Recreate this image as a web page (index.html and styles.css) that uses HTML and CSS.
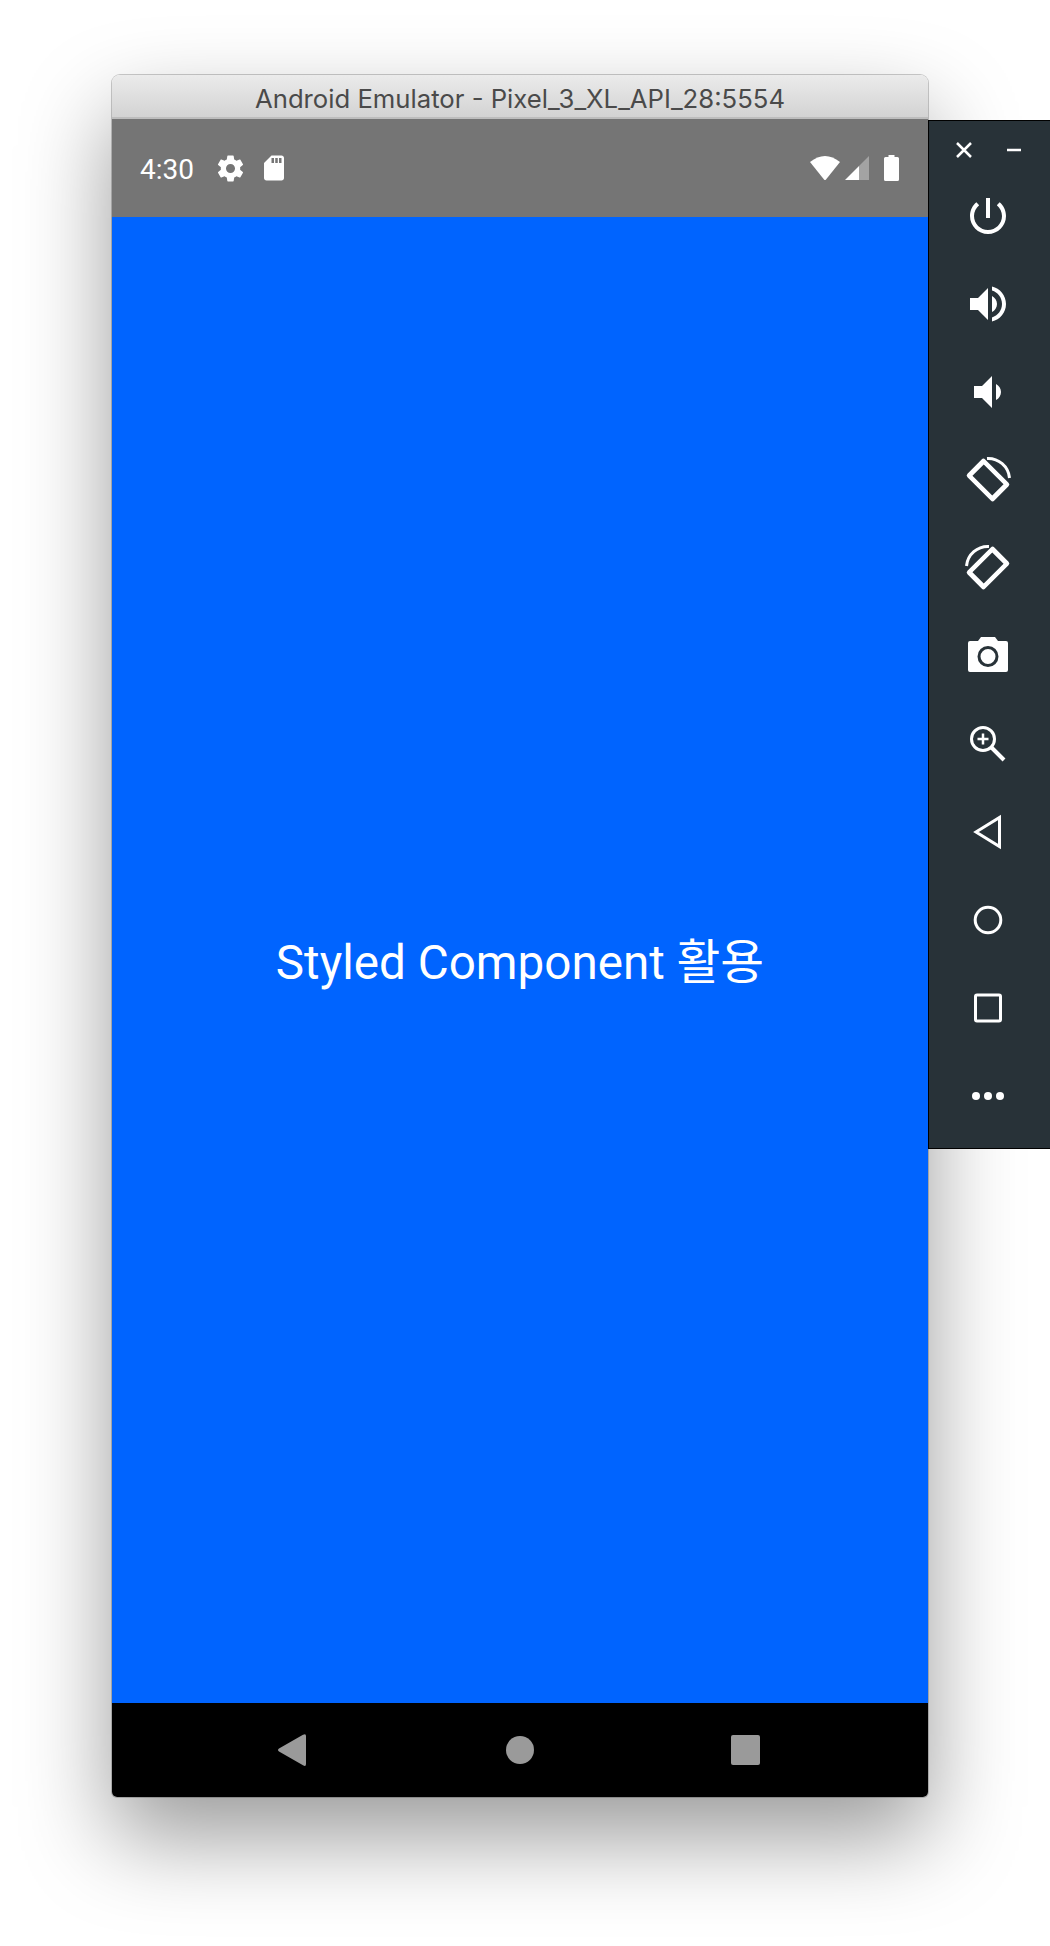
FILE: index.html
```html
<!DOCTYPE html>
<html>

<head>
	<title>Android Emulator - Pixel_3_XL_API_28:5554</title>
	<link rel="stylesheet" href="styles.css">
</head>

<body>
	<div class="stage">
		<div class="window">
			<div class="titlebar">Android Emulator - Pixel_3_XL_API_28:5554</div>
			<div class="statusbar">
				<div class="status-left">
					<span class="time">4:30</span>
					<svg class="status-gear" viewBox="0 0 24 24"><path d="M19.43 12.98c.04-.32.07-.64.07-.98s-.03-.66-.07-.98l2.11-1.65c.19-.15.24-.42.12-.64l-2-3.46c-.12-.22-.39-.3-.61-.22l-2.49 1c-.52-.4-1.08-.73-1.69-.98l-.38-2.65C14.46 2.18 14.25 2 14 2h-4c-.25 0-.46.18-.49.42l-.38 2.65c-.61.25-1.17.59-1.69.98l-2.49-1c-.23-.09-.49 0-.61.22l-2 3.46c-.13.22-.07.49.12.64l2.11 1.65c-.04.32-.07.65-.07.98s.03.66.07.98l-2.11 1.65c-.19.15-.24.42-.12.64l2 3.46c.12.22.39.3.61.22l2.49-1c.52.4 1.08.73 1.69.98l.38 2.65c.03.24.24.42.49.42h4c.25 0 .46-.18.49-.42l.38-2.65c.61-.25 1.17-.59 1.69-.98l2.49 1c.23.09.49 0 .61-.22l2-3.46c.12-.22.07-.49-.12-.64l-2.11-1.65zM12 15.5c-1.93 0-3.5-1.57-3.5-3.5s1.57-3.5 3.5-3.5 3.5 1.57 3.5 3.5-1.57 3.5-3.5 3.5z"/></svg>
					<svg class="status-sd" viewBox="0 0 24 24"><path d="M18 2h-8L4.02 8 4 20c0 1.1.9 2 2 2h12c1.1 0 2-.9 2-2V4c0-1.1-.9-2-2-2zm-6 6h-2V4h2v4zm3 0h-2V4h2v4zm3 0h-2V4h2v4z"/></svg>
				</div>
				<div class="status-right">
					<svg class="status-wifi" viewBox="0 0 30 25"><path d="M0 6Q15 -6 30 6L16 23.5Q15 24.5 14 23.5Z"/></svg>
					<svg class="status-signal" viewBox="0 0 24 24">
						<path d="M14 10L0 24H14Z"/>
						<path class="signal-empty" d="M14 10L24 0V24H14Z"/>
					</svg>
					<svg class="status-battery" viewBox="0 0 15 26"><path d="M4.5 0H10.500V2H13.500Q15 2 15 3.500V24.500Q15 26 13.500 26H1.500Q0 26 0 24.500V3.500Q0 2 1.500 2H4.500Z"/></svg>
				</div>
			</div>
			<div class="app">
				<span class="app-text">Styled Component 활용</span>
			</div>
			<div class="navbar">
				<svg class="nav-back" viewBox="0 0 28 32"><path d="M1 14.500L25 .8Q28 -1 28 2V30Q28 33 25 31.200L1 17.500Q-1 16 1 14.500Z"/></svg>
				<span class="nav-home"></span>
				<span class="nav-recent"></span>
			</div>
		</div>

		<div class="toolbar">
			<div class="toolbar-top">
				<svg class="tool-small" viewBox="0 0 16 16"><path d="M1 1L15 15M15 1L1 15"/></svg>
				<svg class="tool-small" viewBox="0 0 16 16"><path d="M1 8H15"/></svg>
			</div>
			<div class="tool">
				<svg viewBox="0 0 24 24"><path d="M13 3h-2v10h2V3zm4.830 2.170l-1.420 1.420C17.990 7.860 19 9.810 19 12c0 3.870-3.130 7-7 7s-7-3.130-7-7c0-2.190 1.010-4.140 2.580-5.420L6.170 5.170C4.230 6.820 3 9.260 3 12c0 4.970 4.030 9 9 9s9-4.030 9-9c0-2.740-1.230-5.180-3.170-6.830z"/></svg>
			</div>
			<div class="tool">
				<svg viewBox="0 0 24 24"><path d="M3 9v6h4l5 5V4L7 9H3zm13.500 3c0-1.770-1.020-3.290-2.500-4.030v8.050c1.480-.73 2.500-2.250 2.500-4.020zM14 3.230v2.060c2.890.86 5 3.540 5 6.710s-2.110 5.850-5 6.710v2.060c4.010-.91 7-4.490 7-8.770s-2.990-7.860-7-8.770z"/></svg>
			</div>
			<div class="tool">
				<svg viewBox="0 0 24 24"><path d="M18.500 12c0-1.770-1.020-3.290-2.500-4.030v8.050c1.480-.73 2.500-2.250 2.500-4.020zM5 9v6h4l5 5V4L9 9H5z"/></svg>
			</div>
			<div class="tool">
				<svg viewBox="0 0 48 48">
					<path fill-rule="evenodd" transform="rotate(-45 24 24)" d="M14 5H34Q36.500 5 36.500 7.500V40.500Q36.500 43 34 43H14Q11.500 43 11.500 40.500V7.500Q11.500 5 14 5ZM16 10V38H32V10Z"/>
					<path class="line" d="M23 2.500A21.500 21.500 0 0 1 45.500 22"/>
				</svg>
			</div>
			<div class="tool">
				<svg viewBox="0 0 48 48">
					<path fill-rule="evenodd" transform="rotate(45 24 24)" d="M14 5H34Q36.500 5 36.500 7.500V40.500Q36.500 43 34 43H14Q11.500 43 11.500 40.500V7.500Q11.500 5 14 5ZM16 10V38H32V10Z"/>
					<path class="line" d="M25 2.500A21.500 21.500 0 0 0 2.500 22"/>
				</svg>
			</div>
			<div class="tool">
				<svg viewBox="0 0 48 48"><path fill-rule="evenodd" d="M6 9H14L17 5H31L34 9H42Q44 9 44 11V38Q44 40 42 40H6Q4 40 4 38V11Q4 9 6 9ZM24 14A10.500 10.500 0 1 0 24 35A10.500 10.500 0 1 0 24 14ZM24 17A7.500 7.500 0 1 1 24 32A7.500 7.500 0 1 1 24 17Z"/></svg>
			</div>
			<div class="tool">
				<svg viewBox="0 0 48 48">
					<circle class="line" cx="19" cy="19" r="11.500"/>
					<path class="line thick" d="M27.500 27.500L40 40"/>
					<path class="line thin" d="M19 13.500V24.500M13.500 19H24.500"/>
				</svg>
			</div>
			<div class="tool">
				<svg viewBox="0 0 48 48"><path class="line" d="M35.500 9.500V38.500L12 24Z"/></svg>
			</div>
			<div class="tool">
				<svg viewBox="0 0 48 48"><circle class="line" cx="24" cy="24" r="12.800"/></svg>
			</div>
			<div class="tool">
				<svg viewBox="0 0 48 48"><rect class="line" x="11.500" y="11" width="25" height="26" rx="1.500"/></svg>
			</div>
			<div class="tool">
				<svg viewBox="0 0 48 48">
					<circle cx="12" cy="24" r="4"/>
					<circle cx="24" cy="24" r="4"/>
					<circle cx="36" cy="24" r="4"/>
				</svg>
			</div>
		</div>
	</div>
</body>

</html>
```

FILE: styles.css
```css
html, body {
	margin: 0;
	height: 100%;
	overflow: hidden;
	background: #fff;
}

.stage {
	display: flex;
	align-items: flex-start;
	padding: 75px 0 0 112px;
}

/* window */
.window {
	display: flex;
	flex-direction: column;
	width: 816px;
	height: 1722px;
	flex-shrink: 0;
	border-radius: 8px 8px 5px 5px;
	box-shadow: 0 0 0 1px rgba(0, 0, 0, 0.2), 0 40px 90px 0 rgba(0, 0, 0, 0.4);
}

.titlebar {
	height: 44px;
	box-sizing: border-box;
	border-bottom: 2px solid #bdbdbd;
	border-radius: 8px 8px 0 0;
	background: linear-gradient(#ebebeb, #d3d3d3);
	color: #4a4a4a;
	font-family: Inter, "Liberation Sans", sans-serif;
	font-size: 25.700px;
	line-height: 48px;
	text-align: center;
}

.statusbar {
	display: flex;
	justify-content: space-between;
	align-items: center;
	height: 98px;
	box-sizing: border-box;
	padding: 0 29px 0 28px;
	background: #757575;
	fill: #fff;
}

.status-left,
.status-right {
	display: flex;
	align-items: center;
}

.time {
	color: #fff;
	font-family: Roboto, sans-serif;
	font-size: 28px;
	width: 75px;
	padding-top: 2px;
}

.status-gear {
	width: 31px;
	height: 31px;
}

.status-sd {
	width: 30px;
	height: 30px;
	margin-left: 13px;
}

.status-wifi {
	width: 30px;
	height: 25px;
}

.status-signal {
	width: 24px;
	height: 24px;
	margin-left: 5px;
}

.signal-empty {
	fill: #a3a3a3;
}

.status-battery {
	width: 15px;
	height: 26px;
	margin-left: 15px;
}

.app {
	flex: 1;
	display: flex;
	align-items: center;
	justify-content: center;
	padding-bottom: 4px;
	background: #0064ff;
}

.app-text {
	color: #fff;
	font-family: Roboto, "Noto Sans CJK KR", sans-serif;
	font-size: 47.600px;
}

.navbar {
	display: flex;
	align-items: center;
	justify-content: center;
	height: 94px;
	box-sizing: border-box;
	padding-right: 2px;
	background: #000;
	border-radius: 0 0 5px 5px;
	fill: #9a9a9a;
}

.nav-back {
	width: 28px;
	height: 32px;
}

.nav-home {
	width: 28px;
	height: 28px;
	margin-left: 200px;
	border-radius: 50%;
	background: #9a9a9a;
}

.nav-recent {
	width: 29px;
	height: 30px;
	margin-left: 197px;
	border-radius: 2px;
	background: #9a9a9a;
}

/* side toolbar */
.toolbar {
	width: 122px;
	height: 1029px;
	box-sizing: border-box;
	flex-shrink: 0;
	margin-top: 45px;
	border: 1px solid #000;
	border-right: 0;
	background: #283238;
	fill: #fff;
	position: relative;
}

.toolbar-top {
	display: flex;
	justify-content: space-between;
	padding: 21px 28px 0 27px;
	height: 51px;
	box-sizing: border-box;
}

.tool-small {
	width: 16px;
	height: 16px;
	fill: none;
	stroke: #fff;
	stroke-width: 2.500;
}

.tool {
	display: flex;
	align-items: center;
	justify-content: center;
	height: 88px;
	padding-right: 3px;
}

.tool svg {
	width: 48px;
	height: 48px;
}

.line {
	fill: none;
	stroke: #fff;
	stroke-width: 3;
}

.thick {
	stroke-width: 4;
}

.thin {
	stroke-width: 2.500;
}
```
